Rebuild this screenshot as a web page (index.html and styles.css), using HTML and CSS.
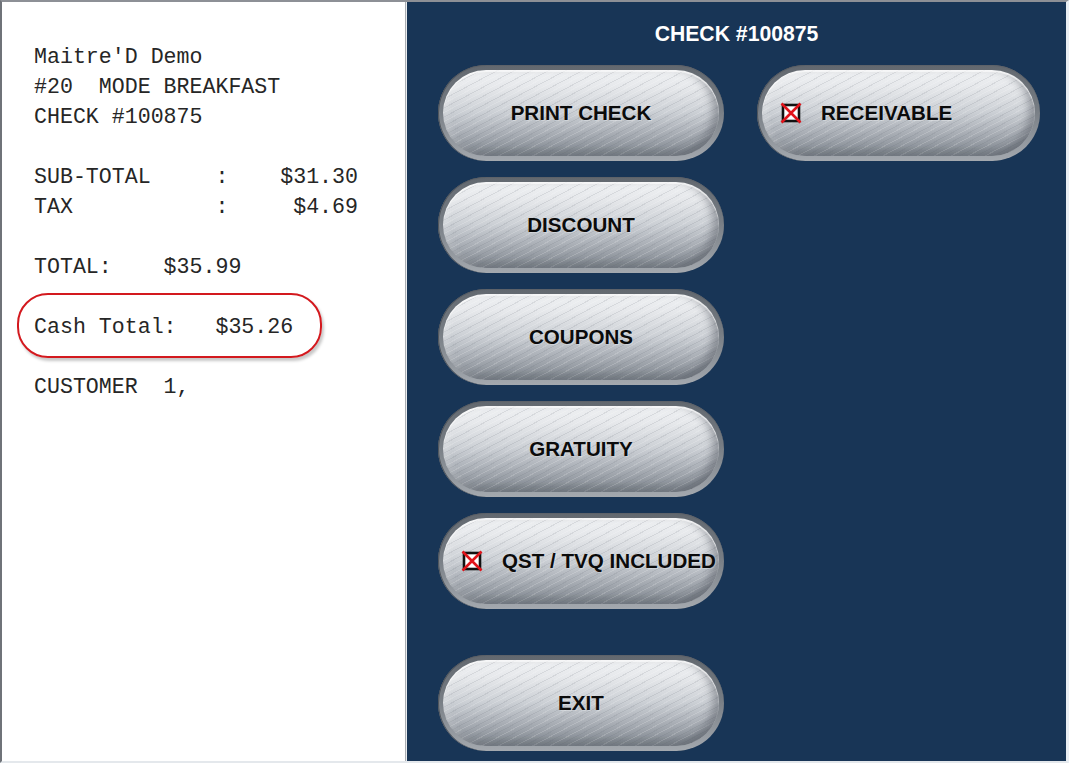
FILE: index.html
```html
<!DOCTYPE html>
<html>
<head>
<meta charset="utf-8">
<link rel="stylesheet" href="styles.css">
</head>
<body>
<div class="frame">
  <div class="receipt">
    <pre class="line">Maitre'D Demo</pre>
    <pre class="line">#20  MODE BREAKFAST</pre>
    <pre class="line">CHECK #100875</pre>
    <pre class="line"> </pre>
    <pre class="line">SUB-TOTAL     :    $31.30</pre>
    <pre class="line">TAX           :     $4.69</pre>
    <pre class="line"> </pre>
    <pre class="line">TOTAL:    $35.99</pre>
    <pre class="line"> </pre>
    <pre class="line highlight">Cash Total:   $35.26<span class="oval"></span></pre>
    <pre class="line"> </pre>
    <pre class="line">CUSTOMER  1,</pre>
  </div>
  <div class="sep"></div>
  <div class="panel">
    <div class="title">CHECK #100875</div>
    <div class="cols">
      <div class="col">
        <div class="btn"><div class="face">PRINT CHECK</div></div>
        <div class="btn"><div class="face">DISCOUNT</div></div>
        <div class="btn"><div class="face">COUPONS</div></div>
        <div class="btn"><div class="face">GRATUITY</div></div>
        <div class="btn"><div class="face icon-face">
          <svg class="chk" width="22" height="22" viewBox="0 0 22 22"><rect x="3" y="3" width="16" height="16" fill="#fff" stroke="#111" stroke-width="2.6"/><path d="M1.5 1.5 L20.5 20.5 M20.5 1.5 L1.5 20.5" stroke="#e0141b" stroke-width="2.6"/></svg>
          <span>QST / TVQ INCLUDED</span></div></div>
        <div class="btn exit"><div class="face">EXIT</div></div>
      </div>
      <div class="col">
        <div class="btn narrow"><div class="face icon-face">
          <svg class="chk" width="22" height="22" viewBox="0 0 22 22"><rect x="3" y="3" width="16" height="16" fill="#fff" stroke="#111" stroke-width="2.6"/><path d="M1.5 1.5 L20.5 20.5 M20.5 1.5 L1.5 20.5" stroke="#e0141b" stroke-width="2.6"/></svg>
          <span>RECEIVABLE</span></div></div>
      </div>
    </div>
  </div>
</div>
</body>
</html>
```
FILE: styles.css
```css
html, body {
  margin: 0;
  padding: 0;
  background: #ffffff;
}
.frame {
  width: 1069px;
  height: 763px;
  box-sizing: border-box;
  border-top: 2px solid #8d9096;
  border-left: 2px solid #6f7379;
  border-right: 3px solid #e9eef3;
  border-bottom: 2px solid #e4e8ec;
  display: flex;
  overflow: hidden;
}
.receipt {
  width: 403px;
  background: #fff;
  padding: 40px 0 0 32px;
  box-sizing: border-box;
}
.line {
  margin: 0;
  font-family: "Liberation Mono", "Courier New", monospace;
  font-size: 21.6px;
  line-height: 30px;
  height: 30px;
  color: #262626;
  white-space: pre;
}
.highlight {
  position: relative;
}
.oval {
  position: absolute;
  left: -17px;
  top: -19px;
  width: 305px;
  height: 65px;
  box-sizing: border-box;
  border: 2px solid #d3191e;
  border-radius: 31px;
  box-shadow: 2px 3px 3px rgba(0,0,0,0.22);
}
.sep {
  width: 2px;
  background: linear-gradient(90deg, #a9adb2 0 1px, #e9ecef 1px 2px);
}
.panel {
  flex: 1;
  background: #183556;
  padding-top: 19px;
  box-sizing: border-box;
}
.title {
  text-align: center;
  font-family: "Liberation Sans", Arial, sans-serif;
  font-weight: bold;
  font-size: 21.2px;
  line-height: 26px;
  color: #ffffff;
  margin-bottom: 18px;
}
.cols {
  display: flex;
  gap: 33px;
  padding-left: 31px;
}
.col {
  display: flex;
  flex-direction: column;
  gap: 16px;
}
.btn {
  width: 286px;
  height: 96px;
  box-sizing: border-box;
  border-radius: 48px;
  padding: 5px;
  background: linear-gradient(180deg, #62686f 0%, #767c83 45%, #a4a9af 100%);
  box-shadow: inset 1px 0 0 #4f555c, inset 0 1px 0 #5d6269;
}
.btn.narrow {
  width: 283px;
}
.btn.exit {
  margin-top: 30px;
}
.face {
  height: 100%;
  border-radius: 43px;
  display: flex;
  align-items: center;
  justify-content: center;
  font-family: "Liberation Sans", Arial, sans-serif;
  font-weight: bold;
  font-size: 20.6px;
  color: #0b0b0b;
  text-shadow: 1px 1px 0 rgba(255,255,255,0.3);
  background:
    repeating-linear-gradient(-28deg, rgba(255,255,255,0) 0 3px, rgba(100,106,116,0.14) 3px 4px, rgba(255,255,255,0) 4px 7px, rgba(255,255,255,0.16) 7px 8px),
    linear-gradient(180deg, #eff1f3 0%, #e6e8eb 20%, #cdd1d6 48%, #abb0b7 72%, #7f868e 100%);
  box-shadow: inset 0 2px 1px rgba(255,255,255,0.7), inset -6px -3px 8px rgba(50,56,64,0.4), inset 4px 0 6px rgba(255,255,255,0.25);
}
.icon-face {
  justify-content: flex-start;
  padding-left: 18px;
  gap: 19px;
}
.chk {
  flex: none;
}
```
